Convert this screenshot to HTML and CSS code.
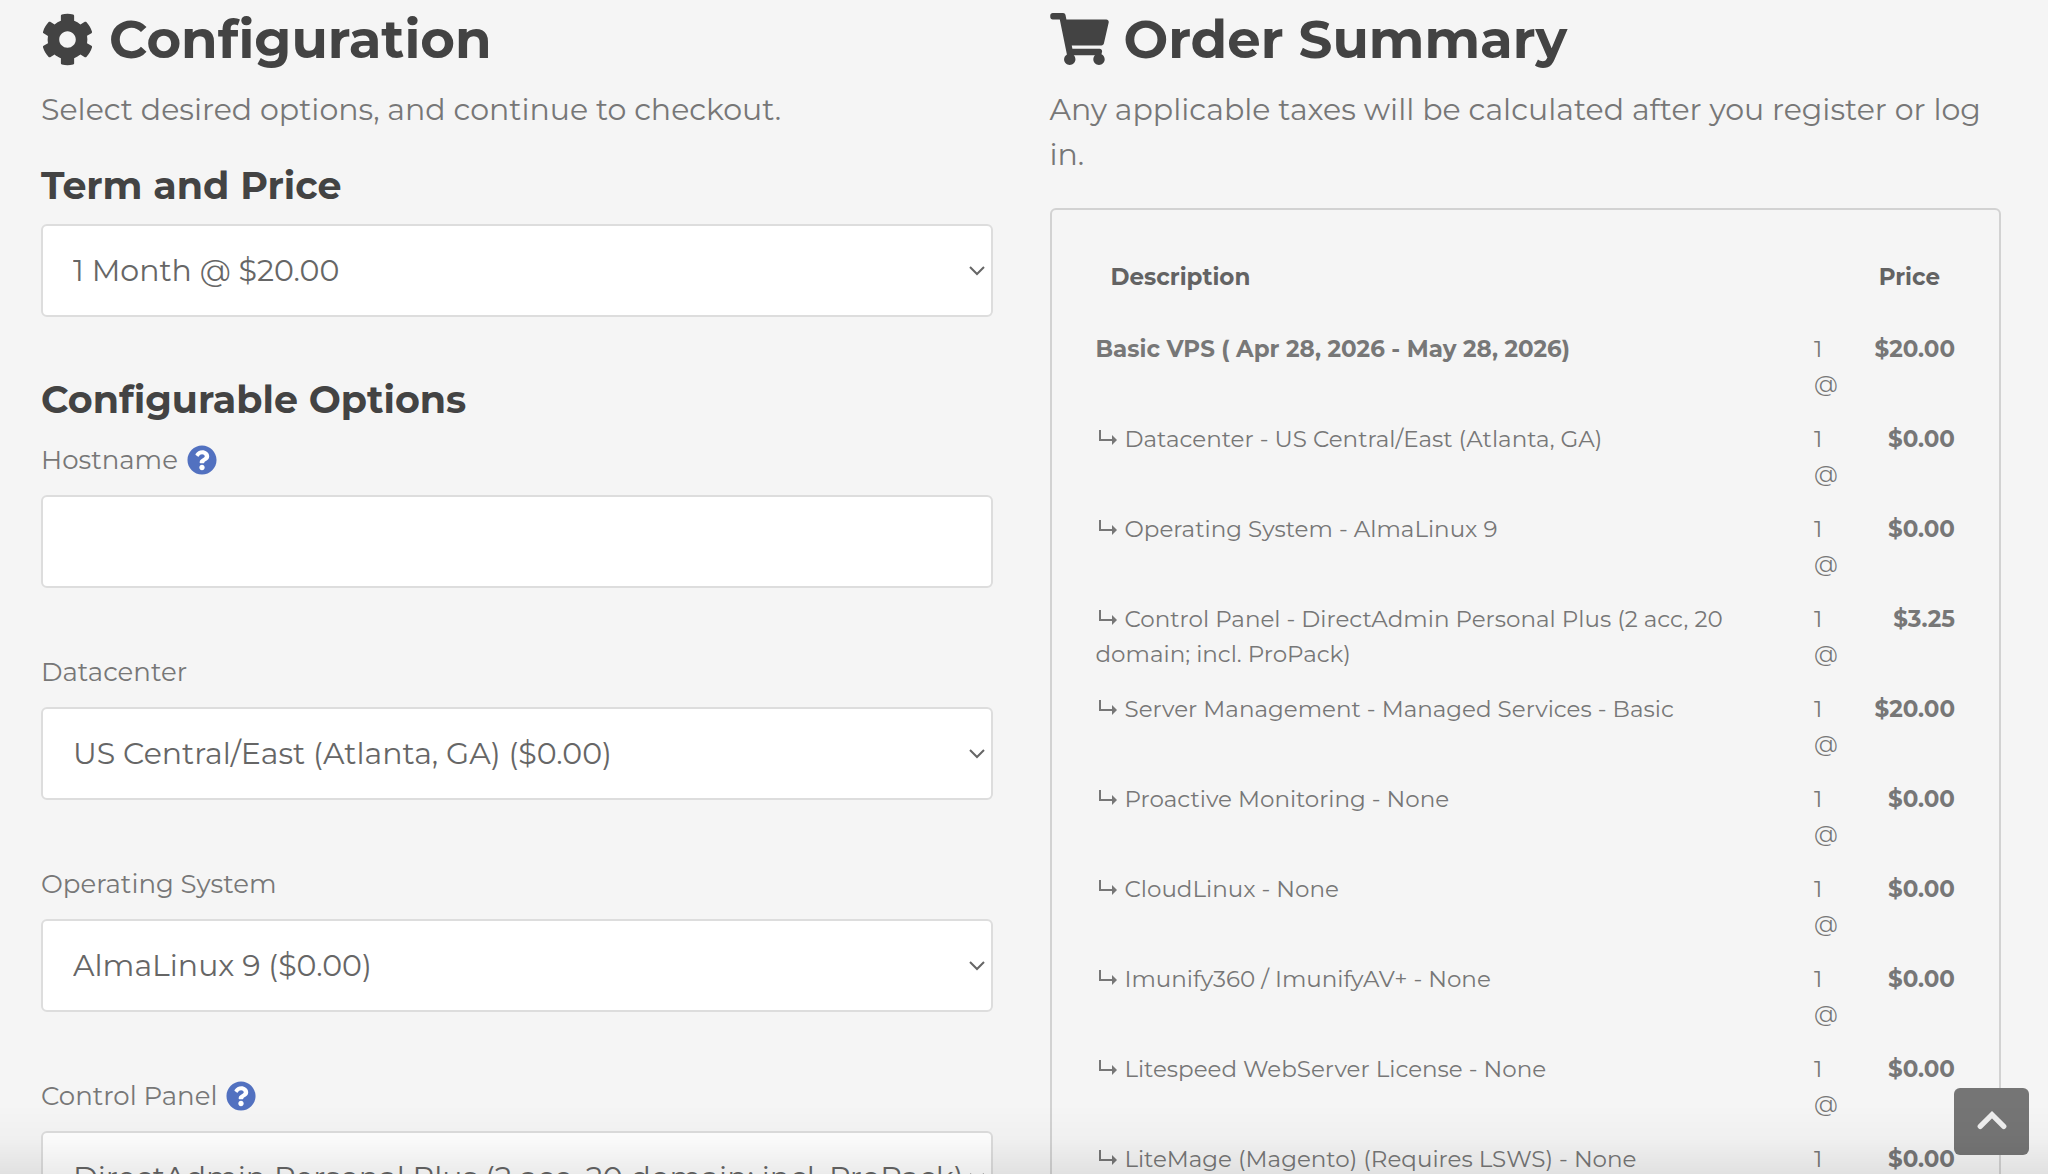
FILE: index.html
```
<!DOCTYPE html>
<html lang="en">

<head>
  <meta charset="UTF-8" />
  <meta name="viewport" content="width=device-width, initial-scale=1" />
  <title>Configure Order</title>
  <link rel="stylesheet" href="styles.css">
</head>

<body>
  <!-- shared icons -->
  <svg class="sprite" aria-hidden="true">
    <symbol id="help" viewBox="0 0 512 512">
      <circle cx="256" cy="256" r="220" fill="#fff" />
      <path fill-rule="evenodd" d="M504 256c0 136.997-111.043 248-248 248S8 392.997 8 256C8 119.083 119.043 8 256 8s248 111.083 248 248zM262.655 90c-54.497 0-89.255 22.957-116.549 63.758-3.536 5.286-2.353 12.415 2.715 16.258l34.699 26.31c5.205 3.947 12.621 3.008 16.665-2.122 17.864-22.658 30.113-35.797 57.303-35.797 20.429 0 45.698 13.148 45.698 32.958 0 14.976-12.363 22.667-32.534 33.976C247.128 238.528 216 254.941 216 296v4c0 6.627 5.373 12 12 12h56c6.627 0 12-5.373 12-12v-1.333c0-28.462 83.186-29.647 83.186-106.667 0-58.002-60.165-102-116.531-102zM256 338c-25.365 0-46 20.635-46 46 0 25.364 20.635 46 46 46s46-20.636 46-46c0-25.364-20.635-46-46-46z" />
    </symbol>
    <symbol id="caret" viewBox="0 0 18 12">
      <path d="M2 2l7 7 7-7" fill="none" stroke="currentColor" stroke-width="2" />
    </symbol>
    <symbol id="sub" viewBox="0 0 24 18">
      <path d="M4 1v10h14" fill="none" stroke="currentColor" stroke-width="2" />
      <path d="M16 6l5 5-5 5z" fill="currentColor" />
    </symbol>
  </svg>

  <main class="page">
    <section class="config">
      <h1>
        <svg class="icon-cog" viewBox="0 0 512 512" aria-hidden="true"><path fill="currentColor" d="M487.4 315.7l-42.6-24.6c4.3-23.2 4.3-47 0-70.2l42.6-24.6c4.9-2.8 7.1-8.6 5.5-14-11.1-35.6-30-67.8-54.7-94.6-3.8-4.1-10-5.1-14.8-2.3L380.8 110c-17.9-15.4-38.5-27.3-60.8-35.1V25.8c0-5.6-3.9-10.5-9.4-11.7-36.7-8.2-74.3-7.8-109.2 0-5.5 1.2-9.4 6.1-9.4 11.7V75c-22.2 7.9-42.8 19.8-60.8 35.1L88.7 85.5c-4.9-2.8-11-1.9-14.8 2.3-24.7 26.7-43.6 58.9-54.7 94.6-1.7 5.4.6 11.2 5.5 14L67.3 221c-4.3 23.2-4.3 47 0 70.2l-42.6 24.6c-4.9 2.8-7.1 8.6-5.5 14 11.1 35.6 30 67.8 54.7 94.6 3.8 4.1 10 5.1 14.8 2.3l42.6-24.6c17.9 15.4 38.5 27.3 60.8 35.1v49.2c0 5.6 3.9 10.5 9.4 11.7 36.7 8.2 74.3 7.8 109.2 0 5.5-1.2 9.4-6.1 9.4-11.7v-49.2c22.2-7.9 42.8-19.8 60.8-35.1l42.6 24.6c4.9 2.8 11 1.9 14.8-2.3 24.7-26.7 43.6-58.9 54.7-94.6 1.5-5.5-.7-11.3-5.6-14.1zM256 336c-44.1 0-80-35.9-80-80s35.9-80 80-80 80 35.9 80 80-35.9 80-80 80z" /></svg>
        Configuration
      </h1>
      <p class="lead">Select desired options, and continue to checkout.</p>

      <form>
        <h2><label for="term">Term and Price</label></h2>
        <div class="select-wrap">
          <select id="term">
            <option>1 Month @ $20.00</option>
          </select>
          <svg class="caret"><use href="#caret" /></svg>
        </div>

        <h2 class="options-title">Configurable Options</h2>
        <div class="field">
          <label for="hostname">Hostname <svg class="help"><use href="#help" /></svg></label>
          <input type="text" id="hostname" />
        </div>
        <div class="field">
          <label for="datacenter">Datacenter</label>
          <div class="select-wrap">
            <select id="datacenter">
              <option>US Central/East (Atlanta, GA) ($0.00)</option>
            </select>
            <svg class="caret"><use href="#caret" /></svg>
          </div>
        </div>
        <div class="field">
          <label for="os">Operating System</label>
          <div class="select-wrap">
            <select id="os">
              <option>AlmaLinux 9 ($0.00)</option>
            </select>
            <svg class="caret"><use href="#caret" /></svg>
          </div>
        </div>
        <div class="field">
          <label for="panel">Control Panel <svg class="help"><use href="#help" /></svg></label>
          <div class="select-wrap">
            <select id="panel">
              <option>DirectAdmin Personal Plus (2 acc, 20 domain; incl. ProPack)</option>
            </select>
            <svg class="caret"><use href="#caret" /></svg>
          </div>
        </div>
      </form>
    </section>

    <section class="summary">
      <h1>
        <svg class="icon-cart" viewBox="0 0 576 512" aria-hidden="true"><path fill="currentColor" d="M528.12 301.319l47.273-208C578.806 78.301 567.391 64 551.99 64H159.208l-9.166-44.81C147.758 8.021 137.93 0 126.529 0H24C10.745 0 0 10.745 0 24v16c0 13.255 10.745 24 24 24h69.883l70.248 343.435C147.325 417.1 136 435.222 136 456c0 30.928 25.072 56 56 56s56-25.072 56-56c0-15.674-6.447-29.835-16.824-40h209.647C430.447 426.165 424 440.326 424 456c0 30.928 25.072 56 56 56s56-25.072 56-56c0-22.172-12.888-41.332-31.579-50.405l5.517-24.276c3.413-15.018-8.002-29.319-23.403-29.319H218.117l-6.545-32h293.145c11.206 0 20.92-7.754 23.403-18.681z" /></svg>
        Order Summary
      </h1>
      <p class="lead">Any applicable taxes will be calculated after you register or log in.</p>

      <div class="summary-box">
        <table>
          <colgroup>
            <col />
            <col class="col-qty" />
            <col class="col-price" />
          </colgroup>
          <thead>
            <tr>
              <th colspan="2">Description</th>
              <th class="price">Price</th>
            </tr>
          </thead>
          <tbody>
            <tr>
              <td><strong>Basic VPS ( Apr 28, 2026 - May 28, 2026)</strong></td>
              <td class="qty">1 @</td>
              <td class="price">$20.00</td>
            </tr>
            <tr>
              <td><svg class="sub"><use href="#sub" /></svg>Datacenter - US Central/East (Atlanta, GA)</td>
              <td class="qty">1 @</td>
              <td class="price">$0.00</td>
            </tr>
            <tr>
              <td><svg class="sub"><use href="#sub" /></svg>Operating System - AlmaLinux 9</td>
              <td class="qty">1 @</td>
              <td class="price">$0.00</td>
            </tr>
            <tr>
              <td><svg class="sub"><use href="#sub" /></svg>Control Panel - DirectAdmin Personal Plus (2 acc, 20 domain; incl. ProPack)</td>
              <td class="qty">1 @</td>
              <td class="price">$3.25</td>
            </tr>
            <tr>
              <td><svg class="sub"><use href="#sub" /></svg>Server Management - Managed Services - Basic</td>
              <td class="qty">1 @</td>
              <td class="price">$20.00</td>
            </tr>
            <tr>
              <td><svg class="sub"><use href="#sub" /></svg>Proactive Monitoring - None</td>
              <td class="qty">1 @</td>
              <td class="price">$0.00</td>
            </tr>
            <tr>
              <td><svg class="sub"><use href="#sub" /></svg>CloudLinux - None</td>
              <td class="qty">1 @</td>
              <td class="price">$0.00</td>
            </tr>
            <tr>
              <td><svg class="sub"><use href="#sub" /></svg>Imunify360 / ImunifyAV+ - None</td>
              <td class="qty">1 @</td>
              <td class="price">$0.00</td>
            </tr>
            <tr>
              <td><svg class="sub"><use href="#sub" /></svg>Litespeed WebServer License - None</td>
              <td class="qty">1 @</td>
              <td class="price">$0.00</td>
            </tr>
            <tr>
              <td><svg class="sub"><use href="#sub" /></svg>LiteMage (Magento) (Requires LSWS) - None</td>
              <td class="qty">1 @</td>
              <td class="price">$0.00</td>
            </tr>
          </tbody>
        </table>
      </div>
    </section>
  </main>

  <button type="button" class="to-top" aria-label="Back to top">
    <svg viewBox="0 0 30 20"><path d="M4 16L15 5l11 11" fill="none" stroke="currentColor" stroke-width="5" stroke-linecap="round" /></svg>
  </button>
  <div class="bottom-fade"></div>
</body>

</html>
```
FILE: styles.css
```
* {
  box-sizing: border-box;
}

html {
  scrollbar-width: none;
}

body {
  margin: 0;
  font-family: Montserrat, Inter, sans-serif;
  background: #f5f5f5;
  color: #777;
}

.sprite {
  display: none;
}

.page {
  display: grid;
  grid-template-columns: minmax(0, 1fr) minmax(0, 1fr);
  gap: 57px;
  padding: 6px 47px 40px 41px;
}

h1,
h2 {
  margin: 0;
  color: #434343;
  font-weight: 700;
}

h1 {
  display: flex;
  align-items: center;
  gap: 15px;
  font-size: 53px;
  line-height: 66px;
}

h2 {
  font-size: 38px;
  line-height: 46px;
  margin-bottom: 15px;
}

.icon-cog {
  width: 53px;
  height: 53px;
}

.icon-cart {
  width: 59px;
  height: 52px;
}

.lead {
  margin: 15px 0 31px;
  font-size: 30px;
  line-height: 45px;
}

.options-title {
  margin-top: 60px;
}

.field {
  margin-bottom: 62px;
}

.field label {
  display: flex;
  align-items: center;
  gap: 9px;
  height: 44px;
  margin-bottom: 13px;
  font-size: 26px;
}

.help {
  width: 30px;
  height: 30px;
  fill: #5271c0;
}

input,
select {
  width: 100%;
  height: 93px;
  padding: 0 30px;
  border: 2px solid #ddd;
  border-radius: 6px;
  background: #fff;
  color: #666;
  font-family: inherit;
  font-size: 30px;
  appearance: none;
}

.select-wrap {
  display: grid;
  align-items: center;
}

.select-wrap > * {
  grid-area: 1 / 1;
}

.caret {
  width: 18px;
  height: 12px;
  margin-right: 7px;
  justify-self: end;
  color: #666;
  pointer-events: none;
}

.summary-box {
  padding: 23px 44px;
  border: 2px solid #d2d2d2;
  border-radius: 6px;
}

table {
  width: 100%;
  table-layout: fixed;
  border-collapse: collapse;
  font-size: 23px;
  line-height: 35px;
}

.col-qty {
  width: 40px;
}

.col-price {
  width: 101px;
}

th {
  padding: 27px 15px;
  color: #636363;
  text-align: left;
}

td {
  padding: 10px 24px 10px 0;
  vertical-align: top;
}

td.qty {
  padding-right: 15px;
}

td.price {
  padding-right: 0;
  font-weight: 700;
}

.price {
  text-align: right;
}

.sub {
  width: 24px;
  height: 18px;
  margin-right: 5px;
}

.to-top {
  position: fixed;
  right: 19px;
  bottom: 19px;
  width: 75px;
  height: 67px;
  padding: 0;
  border: none;
  border-radius: 6px;
  background: #757575;
  color: #eee;
  cursor: pointer;
}

.to-top svg {
  width: 32px;
  height: 22px;
}

.bottom-fade {
  position: fixed;
  left: 0;
  right: 0;
  bottom: 0;
  height: 70px;
  background: linear-gradient(rgba(0, 0, 0, 0), rgba(0, 0, 0, 0.02) 50%, rgba(0, 0, 0, 0.08));
  pointer-events: none;
}
```
